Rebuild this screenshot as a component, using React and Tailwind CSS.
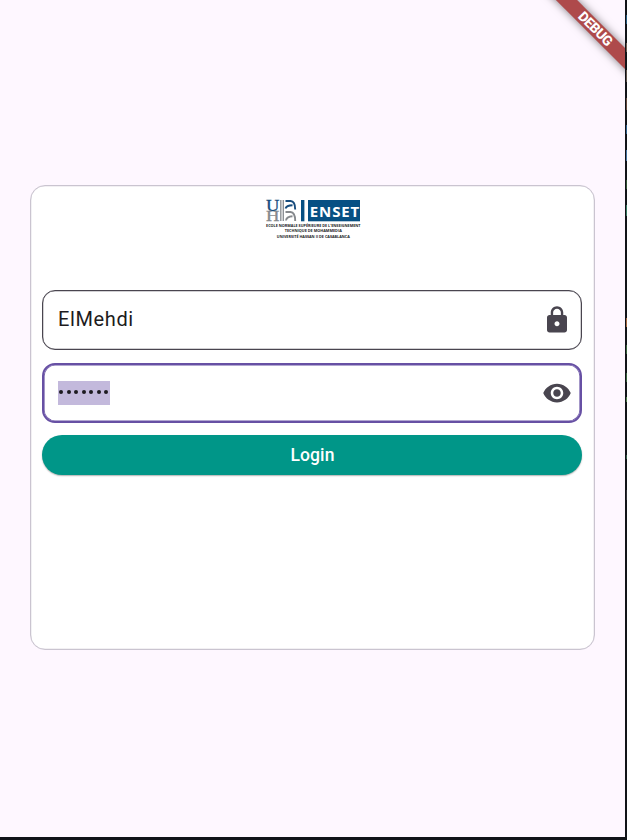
import React from "react";

const specks = [
  ["top-[15px]", "h-[9px]", "bg-[#24597f]"],
  ["top-[43px]", "h-[9px]", "bg-[#6b5a50]"],
  ["top-[70px]", "h-[12px]", "bg-[#5d5148]"],
  ["top-[98px]", "h-[12px]", "bg-[#64483c]"],
  ["top-[125px]", "h-[9px]", "bg-[#2d5f8c]"],
  ["top-[150px]", "h-[11px]", "bg-[#44719f]"],
  ["top-[180px]", "h-[9px]", "bg-[#2f5232]"],
  ["top-[205px]", "h-[11px]", "bg-[#34775f]"],
  ["top-[318px]", "h-[9px]", "bg-[#a3663f]"],
  ["top-[345px]", "h-[9px]", "bg-[#35613a]"],
  ["top-[373px]", "h-[9px]", "bg-[#35613a]"],
  ["top-[397px]", "h-[5px]", "bg-[#4a7a45]"],
  ["top-[455px]", "h-[4px]", "bg-[#2f5a44]"],
  ["top-[490px]", "h-[10px]", "bg-[#303036]"],
];

function Logo() {
  return (
    <svg className="overflow-visible" width="100" height="42" viewBox="263 198 100 42" aria-label="ENSET">
      <text x="266" y="211" textLength="13.4" lengthAdjust="spacingAndGlyphs" fontFamily="Liberation Serif, serif" fontSize="16" fill="#174c7d" stroke="#174c7d" strokeWidth="0.3">U</text>
      <text x="266" y="221" textLength="13.4" lengthAdjust="spacingAndGlyphs" fontFamily="Liberation Serif, serif" fontSize="14" fill="#85888c" stroke="#85888c" strokeWidth="0.3">H</text>
      <path d="M280.8 200V221M283.3 200V221" stroke="#8d9196" strokeWidth="1.4" />
      <g fill="none" strokeWidth="1.9">
        <path d="M285.5 201H290.5Q295.2 201.2 295.2 209.5M285.5 208.5Q286.5 205.2 292.5 205.2" stroke="#174c7d" />
        <path d="M285.5 212H290.5Q295.2 212.3 295.2 221M286 220.5Q286.5 216.4 292.5 216.2" stroke="#85888c" />
      </g>
      <rect x="301" y="200" width="3.4" height="21.3" fill="#075083" />
      <rect x="308" y="200" width="52" height="21.3" fill="#075083" />
      <text x="309.8" y="216.7" textLength="49.4" fontFamily="Open Sans, sans-serif" fontWeight="700" fontSize="15" fill="#fff">ENSET</text>
      <g fontFamily="Open Sans, sans-serif" fontWeight="700" fontSize="4.1" fill="#18191b" textAnchor="middle">
        <text x="313.3" y="227" textLength="94.5" lengthAdjust="spacingAndGlyphs">ECOLE NORMALE SUPÉRIEURE DE L'ENSEIGNEMENT</text>
        <text x="313.3" y="232.4" textLength="57" lengthAdjust="spacingAndGlyphs">TECHNIQUE DE MOHAMMEDIA</text>
        <text x="313.3" y="238" textLength="73" lengthAdjust="spacingAndGlyphs">UNIVERSITÉ HASSAN II DE CASABLANCA</text>
      </g>
    </svg>
  );
}

export default function App() {
  return (
    <div className="relative h-[840px] w-[627px] overflow-hidden bg-[#111318] font-[Roboto,sans-serif]">
      <main className="relative h-[837px] w-[625px] overflow-hidden bg-[#fef7ff] pt-[185px] pl-[30px]">
        <section className="flex h-[465px] w-[565px] flex-col rounded-[15px] border border-[#cac4d0] bg-white pr-[12px] pl-[11px] shadow-[inset_0_0_0_0.25px_#cac4d0]">
          <div className="flex h-[104px] justify-center pt-[12px] pl-px">
            <Logo />
          </div>
          <div className="flex h-[60px] shrink-0 items-center justify-between rounded-[13px] border border-[#49454f] pr-[9px] pl-[15px] shadow-[inset_0_0_0_0.25px_#49454f]">
            <span className="-mt-[3px] text-[20px] leading-[30px] tracking-[0.63px] text-[#1d1b20]">ElMehdi</span>
            <svg width="30" height="30" viewBox="0 0 24 24" fill="#49454f">
              <path d="M18 8h-1V6c0-2.76-2.24-5-5-5S7 3.24 7 6v2H6c-1.1 0-2 .9-2 2v10c0 1.1.9 2 2 2h12c1.1 0 2-.9 2-2V10c0-1.1-.9-2-2-2zm-6 9c-1.1 0-2-.9-2-2s.9-2 2-2 2 .9 2 2-.9 2-2 2zm3.1-9H8.9V6c0-1.71 1.39-3.1 3.1-3.1s3.1 1.39 3.1 3.1v2z" />
            </svg>
          </div>
          <div className="mt-[13px] flex h-[60px] shrink-0 items-center justify-between rounded-[13px] border-2 border-[#6750a4] pr-[8px] pl-[14px] shadow-[inset_0_0_0_0.6px_#6750a4]">
            <span className="flex h-[24px] w-[52px] items-center justify-between bg-[#c3b9dc] pr-[2px] pb-[2px] pl-[1px]">
              {[0, 1, 2, 3, 4, 5, 6].map((i) => (
                <i key={i} className="size-[4px] rounded-full bg-[#1d1b20]" />
              ))}
            </span>
            <svg width="30" height="30" viewBox="0 0 24 24" fill="#49454f">
              <path d="M12 4.5C7 4.5 2.73 7.61 1 12c1.73 4.39 6 7.5 11 7.5s9.27-3.11 11-7.5c-1.73-4.39-6-7.5-11-7.5zM12 17c-2.76 0-5-2.24-5-5s2.24-5 5-5 5 2.24 5 5-2.24 5-5 5zm0-8c-1.66 0-3 1.34-3 3s1.34 3 3 3 3-1.34 3-3-1.34-3-3-3z" />
            </svg>
          </div>
          <button className="mt-[12px] h-[40px] shrink-0 rounded-full bg-[#009688] pl-px text-[17.5px] leading-[40px] font-medium tracking-[0.12px] text-white shadow-[0_1px_1.5px_rgba(0,0,0,0.3)]">
            Login
          </button>
        </section>
        <div className="absolute top-[22px] left-[515.5px] flex h-[15px] w-[160px] rotate-45 items-center justify-center bg-[#ae4a4b] pr-[2px] text-[13.75px] leading-[15px] font-extrabold tracking-[-0.45px] text-white shadow-[0_0_8px_rgba(0,0,0,0.5)]">
          DEBUG
        </div>
      </main>
      {specks.map(([top, height, color]) => (
        <i key={top} className={`absolute left-[626px] w-px ${top} ${height} ${color}`} />
      ))}
    </div>
  );
}
